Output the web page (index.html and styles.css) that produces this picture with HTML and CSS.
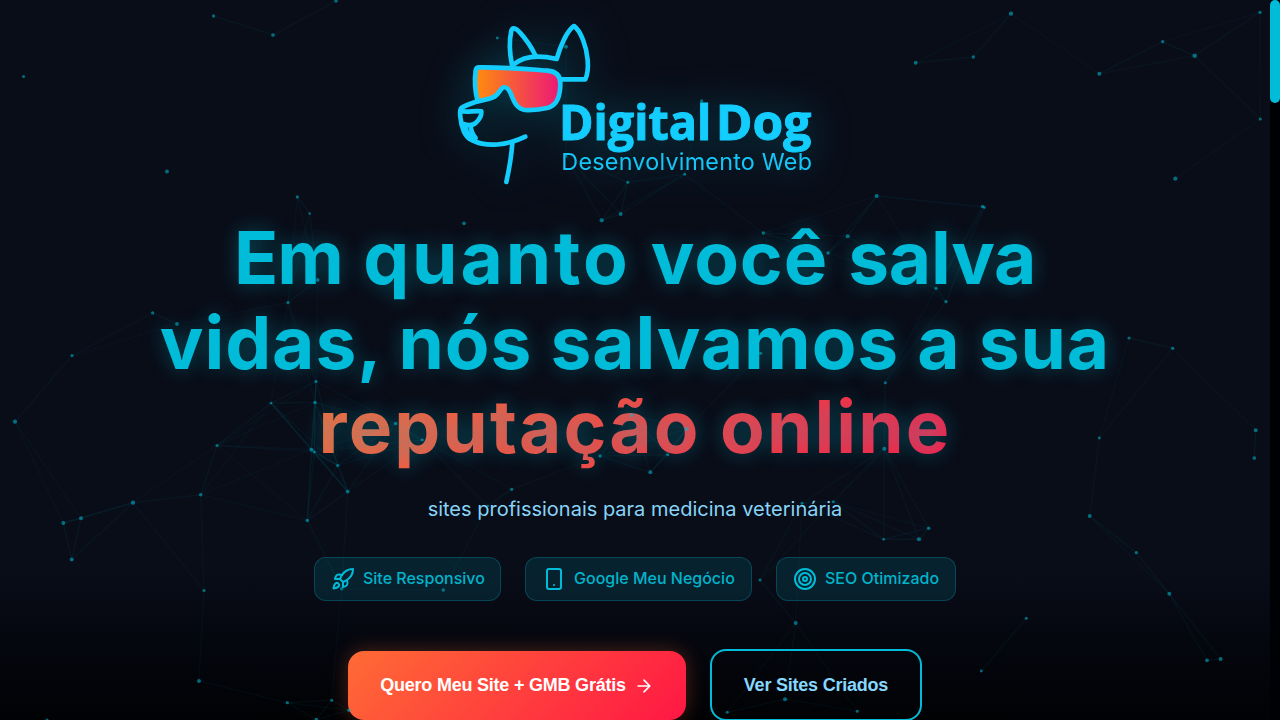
FILE: index.html
```html
<!DOCTYPE html>
<html lang="pt-BR">
<head>
<meta charset="utf-8">
<title>DigitalDog</title>
<link rel="stylesheet" href="styles.css">
</head>
<body>
<main class="hero">
  <svg class="logo" viewBox="0 0 1170 570" role="img" aria-label="DigitalDog Desenvolvimento Web">
    <defs>
      <linearGradient id="lens" x1="0" x2="1" y1="0" y2="0">
        <stop offset="0" stop-color="#ff8d0c"/>
        <stop offset="1" stop-color="#ec1777"/>
      </linearGradient>
    </defs>
    <g class="dog">
      <path d="M216 165C209 130 208 88 214 62C218 50 228 55 240 68C262 92 276 115 287 138"/>
      <path d="M222 163C250 139 290 133 350 147C360 112 380 62 402 48C422 62 440 110 443 150C445 175 442 195 436 208L362 208"/>
      <path fill="url(#lens)" d="M118 172C200 171 270 178 322 182C348 184 361 196 361 220C361 262 350 286 325 293C305 298 280 301 255 300C230 297 222 275 212 250C206 236 200 230 190 232C182 235 178 250 165 259C150 267 132 270 113 274C105 245 104 205 107 182C108 174 112 172 118 172Z"/>
      <path d="M115 273C95 280 76 286 65 293C58 298 60 308 61 320C63 352 76 384 97 391C140 412 200 407 256 380"/>
      <path d="M62 303C82 308 102 301 124 304C126 318 116 330 108 338C100 346 85 347 70 342"/>
      <path d="M75 346C78 365 86 380 98 390M92 346C92 362 98 374 107 384"/>
      <path d="M217 400C214 440 207 480 199 516"/>
    </g>
    <text class="brand" x="357" y="389" textLength="457" lengthAdjust="spacingAndGlyphs">Digital</text>
    <text class="brand" x="827" y="389" textLength="287" lengthAdjust="spacingAndGlyphs">Dog</text>
    <text class="tagline" x="364" y="479" textLength="752" lengthAdjust="spacing">Desenvolvimento Web</text>
  </svg>

  <h1 class="title">
    <span class="line line-1"><span class="tight">Em</span> <span class="wide">quanto</span> <span>você</span> <span class="snug">salva</span></span>
    <span class="line">vidas, nós salvamos a sua</span>
    <span class="line line-3"><span class="accent">reputação online</span></span>
  </h1>

  <p class="subtitle">sites profissionais para medicina veterinária</p>

  <ul class="chips">
    <li class="chip">
      <svg class="icon" viewBox="0 0 24 24"><path d="M4.5 16.5c-1.5 1.26-2 5-2 5s3.74-.5 5-2c.71-.84.7-2.13-.09-2.91a2.18 2.18 0 0 0-2.91-.09z"/><path d="m12 15-3-3a22 22 0 0 1 2-3.95A12.88 12.88 0 0 1 22 2c0 2.72-.78 7.5-6 11a22.35 22.35 0 0 1-4 2z"/><path d="M9 12H4s.55-3.03 2-4c1.62-1.08 5 0 5 0"/><path d="M12 15v5s3.03-.55 4-2c1.08-1.62 0-5 0-5"/></svg>
      <span class="chip-label w1">Site Responsivo</span>
    </li>
    <li class="chip">
      <svg class="icon" viewBox="0 0 24 24"><rect width="14" height="20" x="5" y="2" rx="2"/><path d="M12 18h.01"/></svg>
      <span class="chip-label w2">Google Meu Negócio</span>
    </li>
    <li class="chip">
      <svg class="icon" viewBox="0 0 24 24"><circle cx="12" cy="12" r="10"/><circle cx="12" cy="12" r="6"/><circle cx="12" cy="12" r="2"/></svg>
      <span class="chip-label w3">SEO Otimizado</span>
    </li>
  </ul>

  <div class="actions">
    <button class="btn btn-primary">Quero Meu Site + GMB Grátis
      <svg class="arrow" viewBox="0 0 24 24"><path d="M5 12h14M12 5l7 7-7 7"/></svg>
    </button>
    <button class="btn btn-outline">Ver Sites Criados</button>
  </div>
</main>
<svg class="network" width="1270" height="720" aria-hidden="true"></svg>
<div class="scrollbar"><div class="thumb"></div></div>
<script src="network.js"></script>
</body>
</html>
```
FILE: styles.css
```css
* { box-sizing: border-box; }
html, body { height: 100%; }
body {
  margin: 0;
  overflow: hidden;
  background: #000105;
  font-family: Inter, "Liberation Sans", sans-serif;
}
.hero {
  width: 1270px;
  height: 720px;
  padding-top: 10px;
  overflow: hidden;
  display: flex;
  flex-direction: column;
  align-items: center;
  background: linear-gradient(180deg, #090d18 0, #090d18 570px, #05070f 640px, #010204 720px);
}
.logo {
  width: 390px;
  height: 190px;
  flex: none;
  overflow: visible;
  filter: drop-shadow(0 0 20px rgba(0, 188, 212, .3));
}
.dog {
  fill: none;
  stroke: #14cdff;
  stroke-width: 14;
  stroke-linecap: round;
  stroke-linejoin: round;
}
.brand {
  fill: #14cdff;
  stroke: #14cdff;
  stroke-width: 3;
  font: 700 143px "Open Sans", sans-serif;
}
.tagline {
  fill: #14c6f7;
  font: 400 70px Inter, sans-serif;
}
.title {
  margin: 16px 0 0;
  flex: none;
  color: #00bcd8;
  font-weight: 700;
  font-size: 73px;
  line-height: 84.5px;
  letter-spacing: .9px;
  text-align: center;
  text-shadow: 0 0 20px rgba(0, 188, 212, .35);
  white-space: nowrap;
}
.line { display: block; }
.line-1 { word-spacing: 2px; }
.line-3 { letter-spacing: 2.1px; }
.tight { letter-spacing: -1px; }
.wide { letter-spacing: 2.9px; }
.snug { letter-spacing: -.3px; }
.accent {
  color: transparent;
  background: linear-gradient(135deg, #ff6b35, #ff1744);
  -webkit-background-clip: text;
  background-clip: text;
}
.subtitle {
  margin: 23px 0 0;
  color: #87d4f7;
  font-size: 20px;
  font-weight: 400;
  line-height: 32px;
  white-space: nowrap;
}
.chips {
  display: flex;
  gap: 24px;
  margin: 32px 0 0;
  padding: 0;
  list-style: none;
}
.chip {
  height: 44px;
  display: flex;
  align-items: center;
  gap: 8px;
  padding: 0 16px;
  border: 1px solid rgba(0, 188, 212, .25);
  border-radius: 12px;
  background: rgba(0, 188, 212, .12);
  color: #00b4cb;
  font-weight: 500;
  font-size: 16px;
  white-space: nowrap;
}
.chip-label { padding-bottom: 1px; }
.w1 { width: 121px; }
.w2 { width: 161px; }
.w3 { width: 114px; }
.icon, .arrow {
  width: 24px;
  height: 24px;
  flex: none;
  fill: none;
  stroke: #00bcd8;
  stroke-width: 2;
  stroke-linecap: round;
  stroke-linejoin: round;
}
.actions {
  display: flex;
  align-items: center;
  gap: 24px;
  margin-top: 48px;
}
.btn {
  display: flex;
  align-items: center;
  justify-content: center;
  gap: 8px;
  flex: none;
  padding: 1px 0 0;
  border-radius: 16px;
  font: 700 18px "Liberation Sans", Arial, sans-serif;
  letter-spacing: -.22px;
  white-space: nowrap;
}
.btn-primary {
  width: 338px;
  height: 69px;
  margin-top: 1px;
  border: 0;
  color: #fff;
  background: linear-gradient(135deg, #ff6b35, #ff1744);
  box-shadow: 0 0 20px rgba(255, 107, 53, .3);
}
.arrow { width: 20px; height: 20px; stroke: #fff; }
.btn-outline {
  width: 212px;
  height: 72px;
  border: 2px solid #00bcd8;
  color: #87d8ff;
  background: transparent;
}
.network {
  position: absolute;
  left: 0;
  top: 0;
  pointer-events: none;
}
.network circle { fill: rgba(0, 188, 212, .55); }
.network line { stroke: #00bcd4; stroke-width: 1.5; }
.scrollbar {
  position: absolute;
  right: 0;
  top: 0;
  width: 10px;
  height: 720px;
  background: #000105;
}
.thumb {
  height: 103px;
  border-radius: 5px;
  background: #00bcd8;
}
```
FILE: network.js
```javascript
// Particle positions: x, y, radius
const points = [
  [213.5,16,1.5],[273,35,1.7],[336,1,1.6],[23.5,76.5,1.4],[167,171.5,1.8],
  [297.3,196.9,1.4],[309.7,213.4,1.1],[317.7,279.9,1.7],[288,302.6,1.4],[152.7,312.9,1.5],
  [177,323.9,1.7],[72,355.6,1.4],[15,421.7,2],[271,403.1,1.3],[316,381.4,1.4],
  [315,402.5,1.6],[217,445.5,1.4],[311.3,449.6,1.8],[314.3,452,1.3],[337.7,465.5,1.4],
  [347.7,491.6,1.7],[307.3,520.6,1.6],[200.7,494.7,1.6],[133,502.7,2],[81,518.2,1.8],
  [63.3,523,1.8],[71.7,559.5,1.8],[204,590.5,1.4],[199,681,1.8],[287.3,702.7,1.5],
  [331.7,700.3,1.4],[316.3,719.6,1.6],[47,720,1.4],[395.7,423.5,1.6],[422.3,440,1.3],
  [349,710.3,1.6],[341.7,588.7,1.6],[464,223.3,1.7],[601.7,220.3,2],[620.7,214,1.8],
  [600,456,1.5],[443.3,590,1.6],[511.7,489.3,1.5],[487.7,506,1.2],[763.3,233,1.5],
  [847.7,236.3,1.9],[828,253,1.6],[936,288.3,1.5],[946,301.7,1.5],[760.7,353.3,1.4],
  [885.3,382.7,1.4],[884.3,448.7,1.9],[686.7,429,1.9],[667.7,454.7,1.4],[650.3,472.3,1.8],
  [631.7,415,1.5],[1099.3,438,1.3],[928.7,528.3,1.6],[919,539.3,1.9],[883.7,539.3,1.2],
  [833.3,501.7,1.4],[802,503.3,1.3],[760,580,1.4],[785,699.3,1.9],[727.3,712.3,1.4],
  [857.3,711.3,1.4],[795.7,623,1.8],[1011,13.7,2],[915.7,62.7,1.8],[973.3,57,1.5],
  [1099.3,73.7,1.9],[1162.7,41.7,1.5],[1194.7,55.7,2.1],[1260,12.3,1.5],[1260.3,119,1.4],
  [1175.3,178.7,2],[876.7,196,1.9],[982.5,206.5,1.5],[984.3,207.5,1.3],[1129,338,1.4],
  [1172.7,348.3,1.5],[1255.7,430.3,1.8],[1254.3,458,1.7],[1089.7,516,1.8],[1136.3,552.7,1.5],
  [1169.3,593.7,1.8],[1207,660.3,1.7],[1220.7,659,1.8],[1026.3,618.3,1.4],[981.3,671,1.3],
  [497.3,38,1.3],[566,46.7,1.8],[566,156,1.4],[627.7,182.3,1.4],[701.7,101,1.5],[684.7,174.3,1.3]
];
const reach = 120;
const svg = document.querySelector('.network');
const add = (tag, attrs) => {
  const el = document.createElementNS('http://www.w3.org/2000/svg', tag);
  for (const k in attrs) el.setAttribute(k, attrs[k]);
  svg.appendChild(el);
};
points.forEach(([x1, y1], i) => {
  points.slice(i + 1).forEach(([x2, y2]) => {
    const d = Math.hypot(x1 - x2, y1 - y2);
    if (d < reach) add('line', { x1, y1, x2, y2, 'stroke-opacity': 0.035 + 0.035 * (1 - d / reach) });
  });
});
points.forEach(([cx, cy, r]) => add('circle', { cx, cy, r: r + 0.15 }));
```
